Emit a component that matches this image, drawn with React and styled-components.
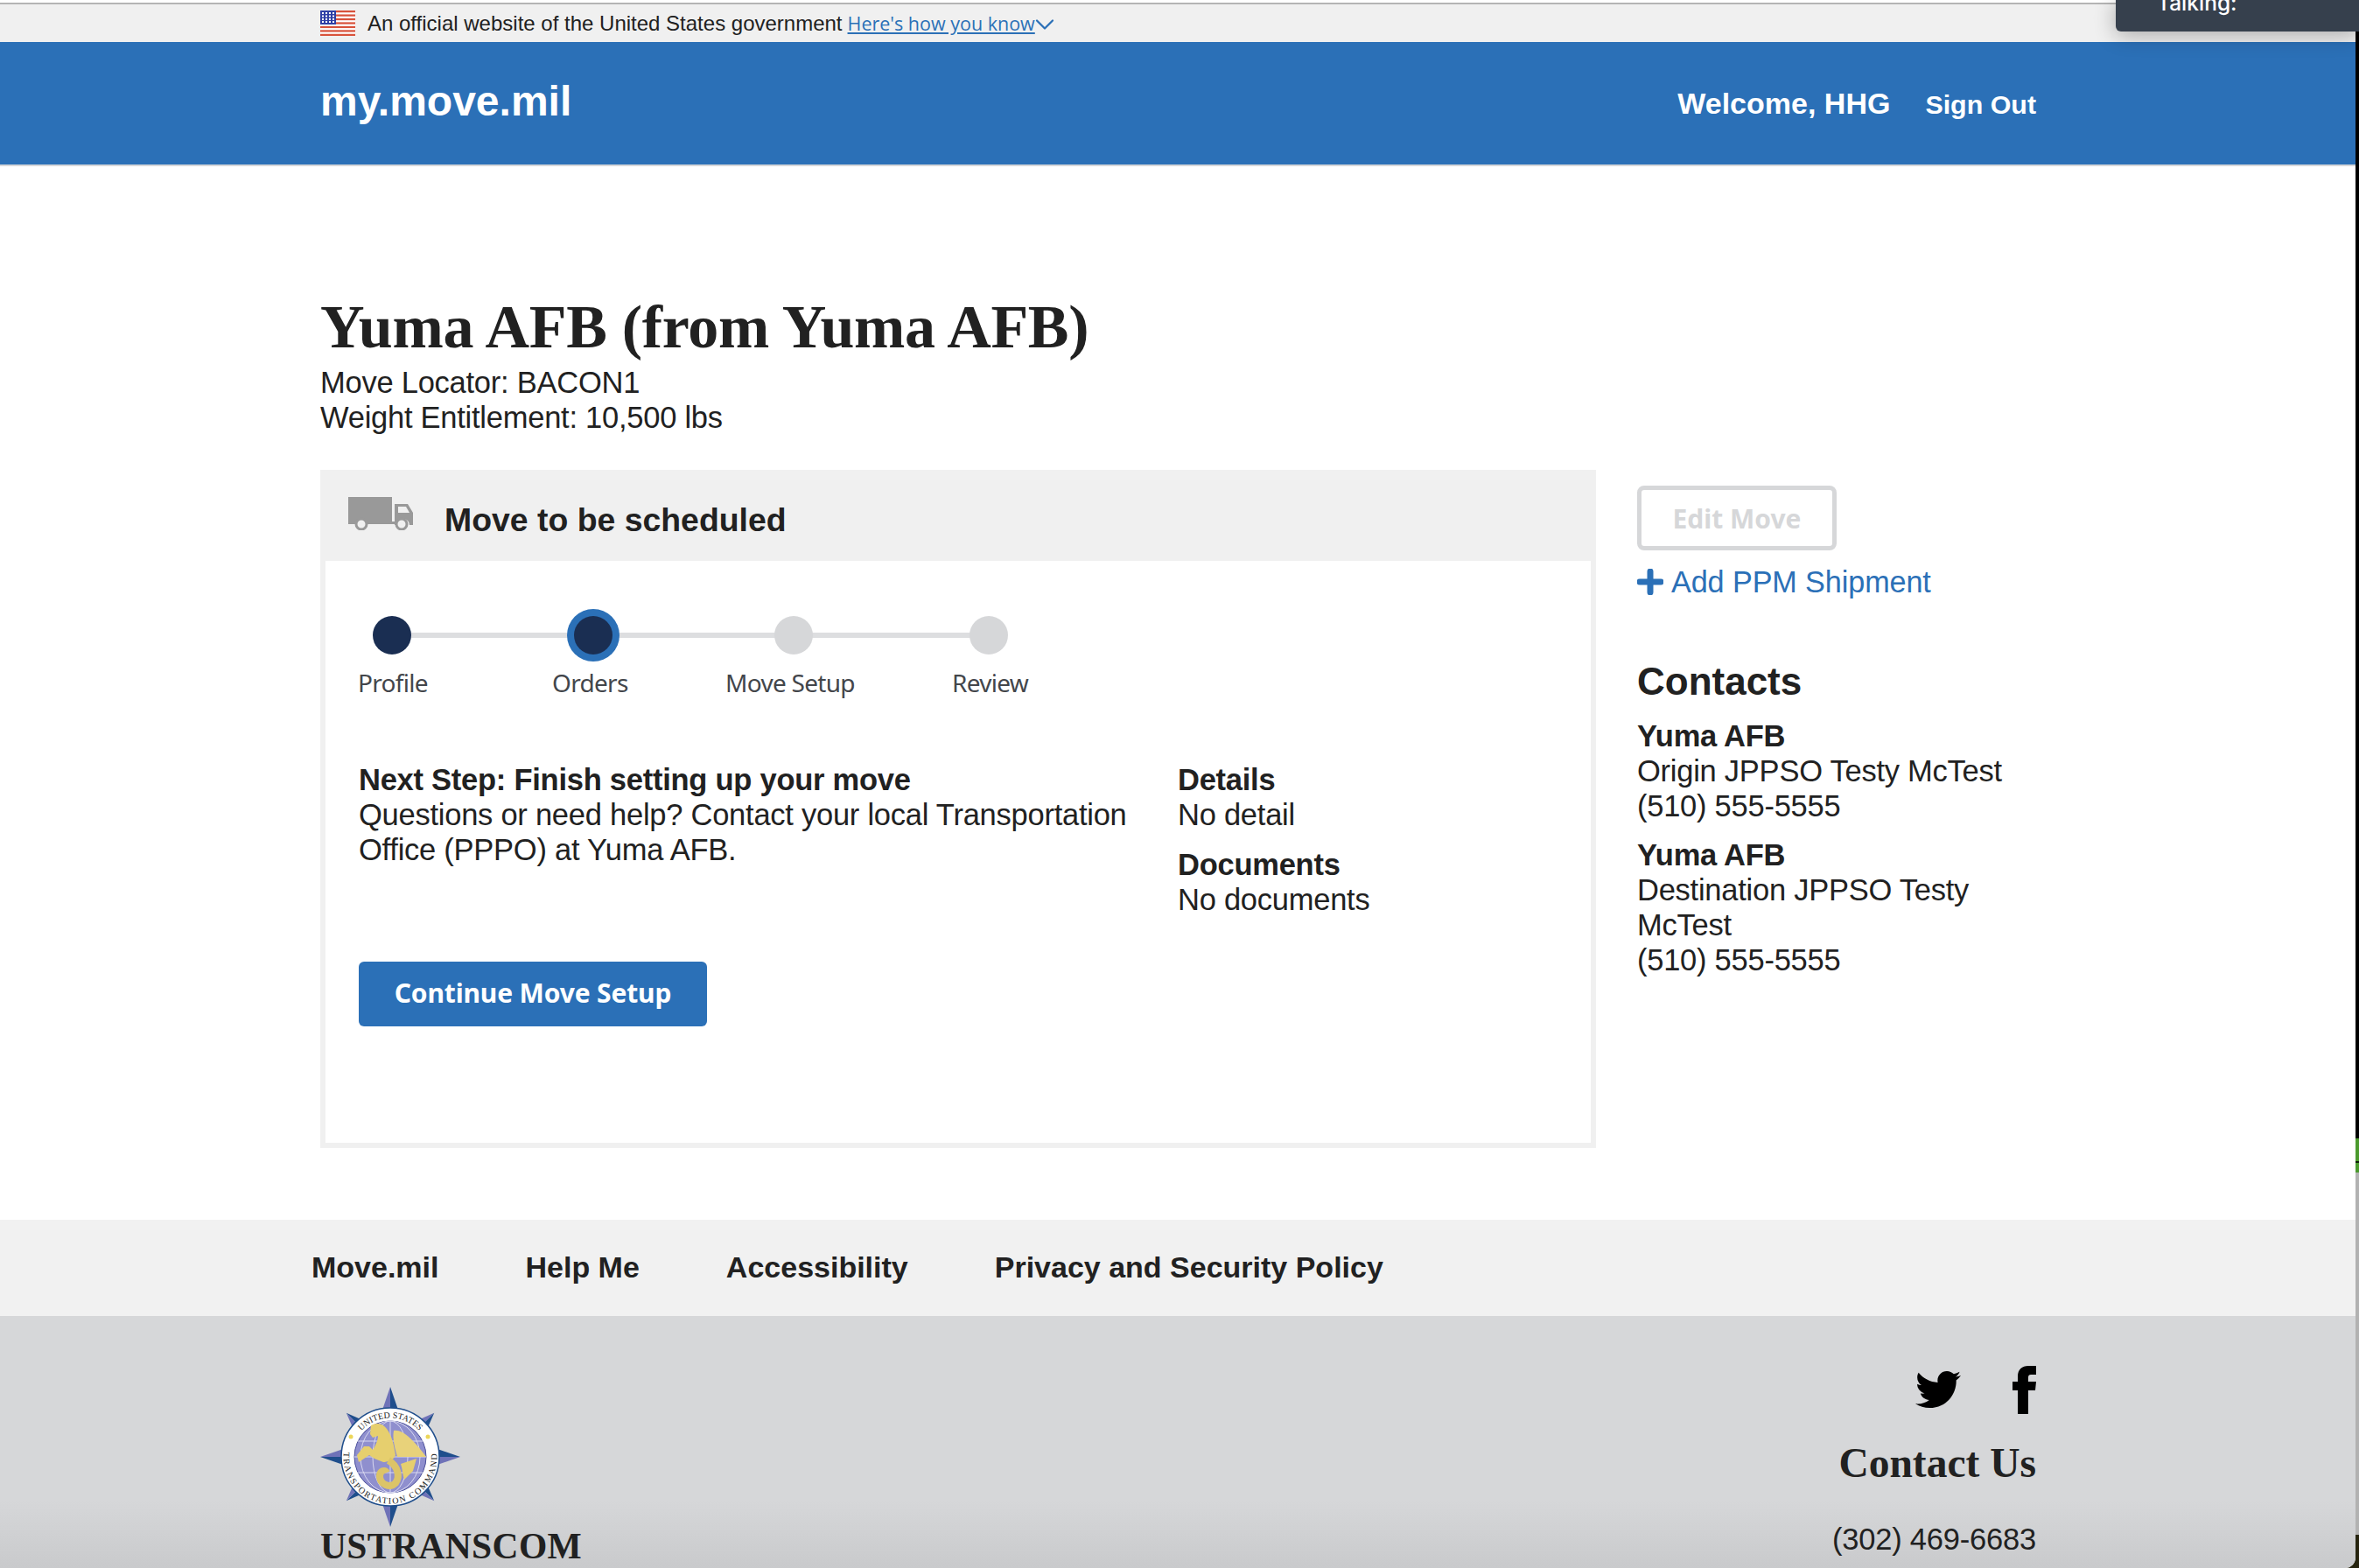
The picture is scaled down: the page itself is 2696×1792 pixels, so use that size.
import React from "react";
import styled, { createGlobalStyle } from "styled-components";
import { FaTwitter } from "react-icons/fa";
import { FiChevronDown } from "react-icons/fi";

const Global = createGlobalStyle`
  html, body { margin: 0; padding: 0; background: #000; }
  body { width: 2696px; height: 1792px; overflow: hidden; font-family: "Liberation Sans", Arial, sans-serif; color: #212121; }
  * { box-sizing: border-box; }
`;

const Screen = styled.div`
  display: flex;
  width: 2696px;
  height: 1792px;
  overflow: hidden;
  position: relative;
  background: #26240f;
`;
const Win = styled.div`
  width: 2692px;
  height: 1792px;
  background: #fff;
  display: flex;
  flex-direction: column;
  border-bottom-right-radius: 12px;
  overflow: hidden;
  position: relative;
`;
const Edge = styled.div`
  width: 4px;
  display: flex;
  flex-direction: column;
`;
const EdgeBit = styled.div`
  height: ${(p) => p.$h}px;
  background: ${(p) => p.$c};
  flex: none;
`;

const Banner = styled.div`
  height: 48px;
  background: #f0f0f0;
  border-top: 2px solid #b4b4b4;
  margin-top: 3px;
  display: flex;
  align-items: center;
  padding: 0 0 3px 366px;
  font-size: 24px;
  flex: none;
  margin-bottom: -3px;
`;
const Flag = styled.svg`
  width: 40px;
  height: 29px;
  margin-right: 14px;
`;
const BannerLink = styled.a`
  color: #2b70b7;
  text-decoration: underline;
  font-family: "Open Sans", sans-serif;
  font-size: 21.5px;
  letter-spacing: 0;
  margin-left: 6px;
`;
const Chev = styled(FiChevronDown)`
  color: #2b70b7;
  font-size: 36px;
  stroke-width: 1.5;
  margin-left: -7px;
  margin-top: 3px;
`;
const Header = styled.header`
  height: 142px;
  flex: none;
  background: #2b70b7;
  border-bottom: 2px solid #d6d7d9;
  display: flex;
  align-items: center;
  justify-content: space-between;
  padding: 0 365px 0 366px;
  color: #fff;
  font-weight: 700;
`;
const Brand = styled.div`
  font-size: 48px;
  margin-top: -5px;
`;
const HeaderNav = styled.div`
  display: flex;
  gap: 40px;
  align-items: center;
`;
const NavItem = styled.span`
  font-size: ${(p) => p.$size}px;
  margin-top: ${(p) => p.$mt || 0}px;
`;
const Main = styled.main`
  flex: 1;
  padding: 140px 365px 0 366px;
`;
const Title = styled.h1`
  margin: 0;
  font-family: "Liberation Serif", serif;
  font-weight: 700;
  font-size: 70px;
  line-height: 87px;
  letter-spacing: -0.3px;
`;
const Sub = styled.div`
  font-size: 34.5px;
  letter-spacing: -0.25px;
  line-height: 40px;
`;
const Columns = styled.div`
  display: flex;
  margin-top: 40px;
  gap: 47px;
`;
const Card = styled.section`
  width: 1458px;
  height: 775px;
  border: 6px solid #f0f0f0;
  border-top: 0;
  flex: none;
  display: flex;
  flex-direction: column;
`;
const CardHead = styled.div`
  height: 104px;
  background: #f0f0f0;
  margin: 0 -6px;
  display: flex;
  align-items: center;
  padding: 10px 0 0 32px;
  gap: 36px;
  font-size: 37.4px;
  font-weight: 700;
`;
const Truck = styled.svg`
  width: 74px;
  height: 38px;
  margin-top: -14px;
`;
const Steps = styled.div`
  display: grid;
  grid-template-columns: 230px 229px 223px 120px;
  margin: 59px 0 0 54px;
`;
const Step = styled.div`
  position: relative;
  height: 90px;
  display: flex;
  flex-direction: column;
`;
const Dot = styled.div`
  position: relative;
  z-index: 1;
  width: 44px;
  height: 44px;
  margin-top: 4px;
  border-radius: 50%;
  background: ${(p) => (p.$done ? "#1a2e52" : "#d6d7d9")};
  box-shadow: ${(p) => (p.$active ? "0 0 0 8px #2b70b7" : "none")};
`;
const Line = styled.div`
  position: absolute;
  top: 23px;
  left: 22px;
  width: 100%;
  height: 6px;
  background: #dddee0;
`;
const StepLabel = styled.div`
  position: absolute;
  top: 60px;
  left: ${(p) => p.$l}px;
  white-space: nowrap;
  font-family: "Noto Sans", sans-serif;
  font-size: 28px;
  line-height: 40px;
  letter-spacing: -0.7px;
  color: #43464b;
`;
const CardBody = styled.div`
  display: flex;
  margin: 81px 0 0 38px;
`;
const NextCol = styled.div`
  width: 936px;
  flex: none;
  font-size: 34.5px;
  letter-spacing: -0.25px;
  line-height: 40px;
`;
const DetailCol = styled.div`
  font-size: 34.5px;
  letter-spacing: -0.25px;
  line-height: 40px;
  display: flex;
  flex-direction: column;
  gap: 17px;
`;
const Strong = styled.strong`
  display: block;
  font-weight: 700;
`;
const Block = styled.div``;
const ContinueBtn = styled.button`
  display: block;
  width: 398px;
  height: 74px;
  margin: 0 0 0 38px;
  border: 0;
  border-radius: 6px;
  background: #2b70b7;
  color: #fff;
  font-family: "Noto Sans", sans-serif;
  font-weight: 700;
  font-size: 30px;
  letter-spacing: -0.15px;
  padding: 0 0 3px;
`;
const BtnRow = styled.div`
  margin-top: 51px;
`;
const Side = styled.aside`
  padding-top: 18px;
  width: 460px;
`;
const EditBtn = styled.button`
  display: block;
  width: 228px;
  height: 74px;
  border: 5px solid #d6d7d9;
  border-radius: 8px;
  background: #fff;
  color: #d6d7d9;
  font-family: "Noto Sans", sans-serif;
  font-weight: 700;
  font-size: 30px;
  padding: 0;
`;
const AddLink = styled.a`
  display: flex;
  align-items: center;
  gap: 9px;
  margin-top: 14px;
  color: #2b70b7;
  font-size: 34.2px;
  letter-spacing: -0.1px;
  line-height: 44px;
`;
const Plus = styled.svg`
  width: 30px;
  height: 30px;
`;
const ContactsTitle = styled.h2`
  margin: 66px 0 0;
  font-size: 44px;
  line-height: 52px;
  font-weight: 700;
`;
const Contact = styled.div`
  font-size: 34.5px;
  letter-spacing: -0.25px;
  line-height: 40px;
  margin-top: ${(p) => p.$mt}px;
`;
const FootNav = styled.nav`
  flex: none;
  height: 110px;
  background: #f1f1f1;
  display: flex;
  align-items: center;
  padding: 0 0 2px 356px;
  gap: 99px;
  font-size: 34px;
  font-weight: 700;
`;
const Foot = styled.footer`
  flex: none;
  height: 288px;
  background: linear-gradient(#d6d7d9 0, #d6d7d9 210px, #c9cacc 100%);
  display: flex;
  justify-content: space-between;
  padding: 79px 365px 0 364px;
`;
const FootLeft = styled.div`
  display: flex;
  flex-direction: column;
`;
const Seal = styled.svg`
  width: 164px;
  height: 164px;
  display: block;
  flex: none;
`;
const Org = styled.div`
  font-family: "Liberation Serif", serif;
  font-weight: 700;
  font-size: 41.5px;
  line-height: 40px;
  margin-left: 2px;
  letter-spacing: 0.4px;
`;
const FootRight = styled.div`
  display: flex;
  flex-direction: column;
  align-items: flex-end;
  margin-top: -23px;
`;
const Social = styled.div`
  display: flex;
  align-items: center;
  gap: 59px;
  height: 56px;
  color: #000;
`;
const FbIcon = styled.svg`
  width: 27px;
  height: 55px;
  fill: #000;
`;
const ContactUs = styled.div`
  font-family: "Liberation Serif", serif;
  font-weight: 700;
  font-size: 47.5px;
  line-height: 56px;
  margin-top: 28px;
`;
const Phone = styled.div`
  font-size: 34.5px;
  letter-spacing: -0.2px;
  line-height: 40px;
  margin-top: 39px;
`;
const Toast = styled.div`
  position: absolute;
  top: 0;
  right: 0;
  width: 278px;
  height: 36px;
  background: #36404d;
  border-bottom-left-radius: 6px;
  box-shadow: 0 4px 24px rgba(0, 0, 0, 0.3);
  overflow: hidden;
  z-index: 5;
`;
const ToastText = styled.div`
  color: #fff;
  font-family: Inter, sans-serif;
  font-weight: 500;
  font-size: 24.5px;
  line-height: 30px;
  margin: -12px 0 0 47px;
`;

const stepData = [
  { name: "Profile", l: -17, done: true },
  { name: "Orders", l: -25, done: true, active: true },
  { name: "Move Setup", l: -56 },
  { name: "Review", l: -20, last: true },
];

const point = (angle, tip, base, w, left, right) => (
  <g key={angle} transform={`rotate(${angle})`}>
    <polygon points={`0,${-tip} 0,${-base} ${-w},${-base}`} fill={left} />
    <polygon points={`0,${-tip} 0,${-base} ${w},${-base}`} fill={right} />
  </g>
);

const DARK = "#1f4e8c";
const LILAC = "#6f72b8";

export default function App() {
  return (
    <Screen>
      <Global />
      <Win>
        <Banner>
          <Flag viewBox="0 0 40 29">
            <rect width="40" height="29" fill="#fff" />
            {[0, 2, 4, 6, 8, 10, 12].map((i) => (
              <rect key={i} y={(i * 29) / 13} width="40" height="2.23" fill="#d8523b" />
            ))}
            <rect width="18" height="16" fill="#2f3fa5" />
            {[3, 6.5, 10, 13].map((y) =>
              [3, 7, 11, 15].map((x) => (
                <rect key={x + "-" + y} x={x - 1} y={y - 1} width="2" height="2" fill="#fff" />
              ))
            )}
          </Flag>
          An official website of the United States government
          <BannerLink>Here's how you know</BannerLink>
          <Chev />
        </Banner>
        <Header>
          <Brand>my.move.mil</Brand>
          <HeaderNav>
            <NavItem $size={34}>Welcome, HHG</NavItem>
            <NavItem $size={30.4} $mt={2}>Sign Out</NavItem>
          </HeaderNav>
        </Header>
        <Main>
          <Title>Yuma AFB (from Yuma AFB)</Title>
          <Sub>Move Locator: BACON1</Sub>
          <Sub>Weight Entitlement: 10,500 lbs</Sub>
          <Columns>
            <Card>
              <CardHead>
                <Truck viewBox="0 0 74 38">
                  <rect x="0" y="0" width="50" height="28" fill="#999" />
                  <path d="M53 8h15l6 10v14h-4a7 7 0 0 0-14 0h-3z" fill="#999" />
                  <path d="M57 11h9l4 7H57z" fill="#f0f0f0" />
                  <rect x="0" y="28" width="9" height="3" fill="#999" />
                  <rect x="21" y="28" width="32" height="3" fill="#999" />
                  <circle cx="15" cy="31" r="6" fill="#f0f0f0" stroke="#999" strokeWidth="3" />
                  <circle cx="61" cy="31" r="6" fill="#f0f0f0" stroke="#999" strokeWidth="3" />
                </Truck>
                Move to be scheduled
              </CardHead>
              <Steps>
                {stepData.map((s) => (
                  <Step key={s.name}>
                    {!s.last && <Line />}
                    <Dot $done={s.done} $active={s.active} />
                    <StepLabel $l={s.l}>{s.name}</StepLabel>
                  </Step>
                ))}
              </Steps>
              <CardBody>
                <NextCol>
                  <Strong>Next Step: Finish setting up your move</Strong>
                  Questions or need help? Contact your local Transportation
                  <br />
                  Office (PPPO) at Yuma AFB.
                </NextCol>
                <DetailCol>
                  <Block>
                    <Strong>Details</Strong>
                    No detail
                  </Block>
                  <Block>
                    <Strong>Documents</Strong>
                    No documents
                  </Block>
                </DetailCol>
              </CardBody>
              <BtnRow>
                <ContinueBtn>Continue Move Setup</ContinueBtn>
              </BtnRow>
            </Card>
            <Side>
              <EditBtn>Edit Move</EditBtn>
              <AddLink>
                <Plus viewBox="0 0 30 30">
                  <path d="M15 3v24M3 15h24" stroke="#2b70b7" strokeWidth="7" strokeLinecap="round" />
                </Plus>
                Add PPM Shipment
              </AddLink>
              <ContactsTitle>Contacts</ContactsTitle>
              <Contact $mt={16}>
                <Strong>Yuma AFB</Strong>
                Origin JPPSO Testy McTest
                <br />
                (510) 555-5555
              </Contact>
              <Contact $mt={16}>
                <Strong>Yuma AFB</Strong>
                Destination JPPSO Testy
                <br />
                McTest
                <br />
                (510) 555-5555
              </Contact>
            </Side>
          </Columns>
        </Main>
        <FootNav>
          <span>Move.mil</span>
          <span>Help Me</span>
          <span>Accessibility</span>
          <span>Privacy and Security Policy</span>
        </FootNav>
        <Foot>
          <FootLeft>
            <Seal viewBox="-82 -82 164 164">
              {point(0, 80, 48, 11, LILAC, DARK)}
              {point(90, 80, 48, 11, DARK, LILAC)}
              {point(180, 80, 48, 11, DARK, LILAC)}
              {point(270, 80, 48, 11, DARK, LILAC)}
              {point(45, 71, 48, 9, LILAC, DARK)}
              {point(135, 71, 48, 9, DARK, LILAC)}
              {point(225, 71, 48, 9, DARK, LILAC)}
              {point(315, 71, 48, 9, LILAC, DARK)}
              <circle r="56" fill="#fff" stroke="#1f4e8c" strokeWidth="1.5" />
              <circle r="41" fill="#8f8fce" stroke="#4a4f9a" strokeWidth="1" />
              <g stroke="#d8d8f0" strokeWidth="1" fill="none">
                <ellipse rx="20" ry="41" />
                <ellipse rx="34" ry="41" />
                <path d="M-41 0H41M-37-18H37M-37 18H37M0-41V41" />
              </g>
              <path d="M4-30C14-32 28-18 41 0L8 0C6-8 2-20 4-30Z" fill="#e8d27a" />
              <path
                d="M-22-36C-16-40-8-38-4-32 2-24 4-14 6-2 4 4-4 6-8 6L-18 2-24 -2-36 6-38-2-30-12-24-12-20-8C-16-14-14-20-14-24L-20-22-23-26Z"
                fill="#e6cf6e"
              />
              <path d="M-2 4C8 10 12 22 6 30 0 36-12 32-12 22-12 16-6 14-4 18" fill="none" stroke="#dcc468" strokeWidth="8" />
              <path d="M12 8L30 2 26 16 16 26C14 20 14 14 12 8Z" fill="#e6cf6e" />
              <circle cx="-45" cy="-23" r="2.5" fill="#ecd65a" />
              <circle cx="43" cy="-23" r="2.5" fill="#ecd65a" />
              <defs>
                <path id="sealTop" d="M-41 -18A45 45 0 0 1 41 -18" />
                <path id="sealBottom" d="M-52 -12A53.4 53.4 0 1 0 52 -12" />
              </defs>
              <text fontFamily="Liberation Serif, serif" fontSize="10" fill="#222">
                <textPath href="#sealTop" startOffset="50%" textAnchor="middle">UNITED STATES</textPath>
              </text>
              <text fontFamily="Liberation Serif, serif" fontSize="10" letterSpacing="1.6" fill="#222">
                <textPath href="#sealBottom" startOffset="50%" textAnchor="middle">TRANSPORTATION COMMAND</textPath>
              </text>
            </Seal>
            <Org>USTRANSCOM</Org>
          </FootLeft>
          <FootRight>
            <Social>
              <FaTwitter size={52} />
              <FbIcon viewBox="0 0 27 55">
                <path d="M18 55H6V28H0V18H6V12C6 4 11 0 18 0H27V10H21C19 10 18 11 18 13V18H27L26 28H18Z" />
              </FbIcon>
            </Social>
            <ContactUs>Contact Us</ContactUs>
            <Phone>(302) 469-6683</Phone>
          </FootRight>
        </Foot>
      </Win>
      <Edge>
        <EdgeBit $h={1301} $c="#000" />
        <EdgeBit $h={26} $c="#4b9a2e" />
        <EdgeBit $h={2} $c="#10200a" />
        <EdgeBit $h={11} $c="#4b9a2e" />
        <EdgeBit $h={414} $c="#b2b2b2" />
        <EdgeBit $h={38} $c="#26240f" />
      </Edge>
      <Toast>
        <ToastText>Talking:</ToastText>
      </Toast>
    </Screen>
  );
}
